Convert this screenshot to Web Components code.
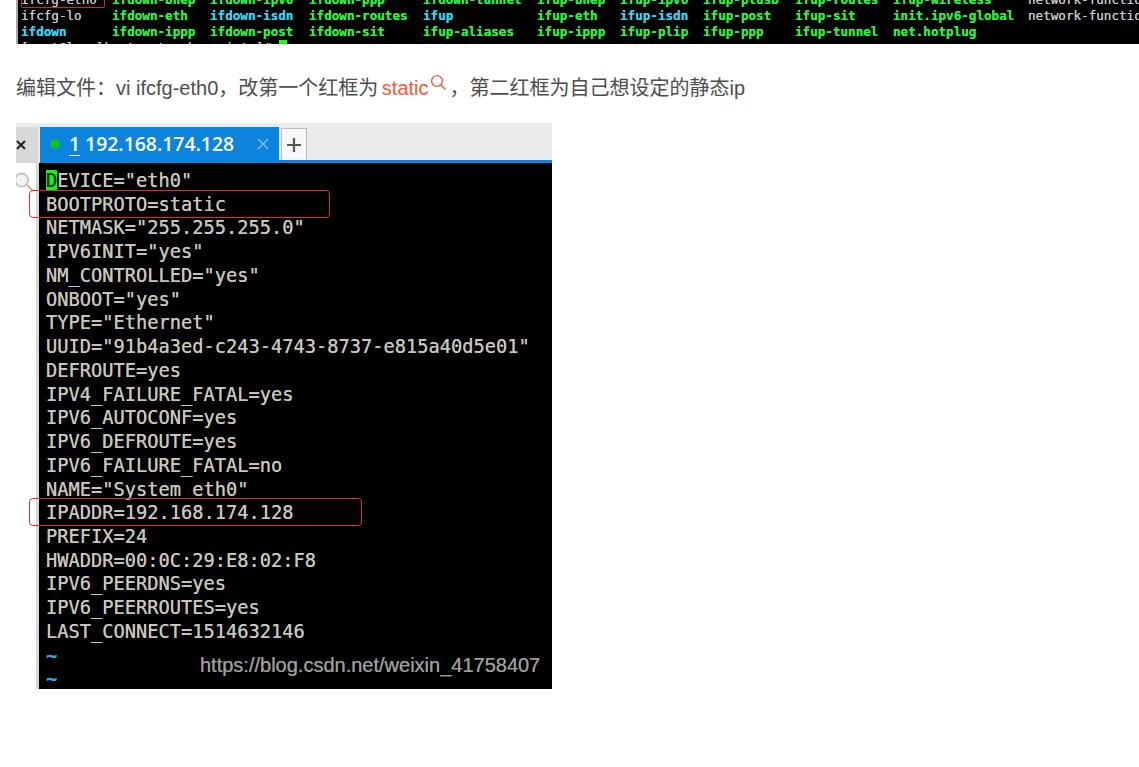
<!DOCTYPE html>
<html lang="zh-CN">
<head>
<meta charset="utf-8">
<title>ifcfg-eth0</title>
<style>
  html, body { margin: 0; padding: 0; background: #fff; }
  body { height: 767px; overflow: hidden; font-family: "Liberation Sans", "Noto Sans CJK SC", sans-serif; }
  main { display: block; padding-left: 16px; }
</style>
</head>
<body>
<main>
  <ls-strip></ls-strip>
  <article-para>编辑文件：vi ifcfg-eth0，改第一个红框为 <search-link>static</search-link>，第二红框为自己想设定的静态ip</article-para>
  <xshell-shot>
    <term-line>DEVICE="eth0"</term-line>
    <term-line>BOOTPROTO=static</term-line>
    <term-line>NETMASK="255.255.255.0"</term-line>
    <term-line>IPV6INIT="yes"</term-line>
    <term-line>NM_CONTROLLED="yes"</term-line>
    <term-line>ONBOOT="yes"</term-line>
    <term-line>TYPE="Ethernet"</term-line>
    <term-line>UUID="91b4a3ed-c243-4743-8737-e815a40d5e01"</term-line>
    <term-line>DEFROUTE=yes</term-line>
    <term-line>IPV4_FAILURE_FATAL=yes</term-line>
    <term-line>IPV6_AUTOCONF=yes</term-line>
    <term-line>IPV6_DEFROUTE=yes</term-line>
    <term-line>IPV6_FAILURE_FATAL=no</term-line>
    <term-line>NAME="System eth0"</term-line>
    <term-line>IPADDR=192.168.174.128</term-line>
    <term-line>PREFIX=24</term-line>
    <term-line>HWADDR=00:0C:29:E8:02:F8</term-line>
    <term-line>IPV6_PEERDNS=yes</term-line>
    <term-line>IPV6_PEERROUTES=yes</term-line>
    <term-line>LAST_CONNECT=1514632146</term-line>
    <term-line tilde>~</term-line>
    <term-line tilde>~</term-line>
  </xshell-shot>
</main>

<script>
const LISTING = [
  ['ifcfg-eth0:f', 'ifdown-bnep', 'ifdown-ipv6', 'ifdown-ppp', 'ifdown-tunnel', 'ifup-bnep', 'ifup-ipv6', 'ifup-plusb', 'ifup-routes', 'ifup-wireless', 'network-functions:f'],
  ['ifcfg-lo:f', 'ifdown-eth', 'ifdown-isdn:l', 'ifdown-routes', 'ifup:l', 'ifup-eth', 'ifup-isdn:l', 'ifup-post', 'ifup-sit', 'init.ipv6-global', 'network-functions-ipv6:f'],
  ['ifdown:l', 'ifdown-ippp', 'ifdown-post', 'ifdown-sit', 'ifup-aliases', 'ifup-ippp', 'ifup-plip', 'ifup-ppp', 'ifup-tunnel', 'net.hotplug', ''],
];

class LsStrip extends HTMLElement {
  constructor() {
    super();
    const shadow = this.attachShadow({ mode: 'open' });
    const cells = LISTING.flat().map(entry => {
      const [name, kind] = entry.split(':');
      return `<span class="${kind || 'x'}">${name}</span>`;
    }).join('');
    shadow.innerHTML = `
      <style>
        :host { display: block; height: 44px; overflow: hidden; background: #000; border-left: 2px solid #a9a9a9; box-sizing: border-box; position: relative; }
        .inner { margin: -8px 0 0 3px; font: 12.6px/16px "DejaVu Sans Mono", monospace; text-shadow: 0 0 .6px currentColor; }
        .grid { display: grid; grid-template-columns: 91px 98px 99px 114px 114px 83px 83px 92px 98px 135px 200px; grid-auto-rows: 16px; white-space: pre; }
        .x { color: #2bf03c; font-weight: 700; }
        .l { color: #35d4ee; font-weight: 700; }
        .f { color: #c8c8c8; }
        .prompt { color: #c8c8c8; height: 16px; white-space: pre; }
        .cur { display: inline-block; width: 8px; height: 16px; background: #19ff19; vertical-align: top; }
        .box { position: absolute; left: 3px; top: -6px; width: 84px; height: 14px; border: 1px solid #d02a2a; border-radius: 2px; box-sizing: border-box; }
      </style>
      <div class="inner">
        <div class="grid">${cells}</div>
        <div class="prompt">[root@localhost network-scripts]# <span class="cur"></span></div>
      </div>
      <div class="box"></div>`;
  }
}

class ArticlePara extends HTMLElement {
  constructor() {
    super();
    this.attachShadow({ mode: 'open' }).innerHTML = `
      <style>
        :host { display: block; margin: 29px 0 20px; font-size: 20px; line-height: 30px; color: #4d4d4d; white-space: nowrap; }
      </style>
      <slot></slot>`;
  }
}

class SearchLink extends HTMLElement {
  constructor() {
    super();
    this.attachShadow({ mode: 'open' }).innerHTML = `
      <style>
        :host { display: inline; color: #fc5531; margin-left: -2px; }
        svg { width: 18px; height: 18px; vertical-align: 3px; margin-right: 3px; }
      </style>
      <slot></slot><svg viewBox="0 0 18 18" fill="none" stroke="#fc5531" stroke-width="1.4" stroke-linecap="round"><circle cx="8" cy="7" r="5.4"/><path d="M12 11l4 4"/></svg>`;
  }
}

class TermLine extends HTMLElement {
  constructor() {
    super();
    // no whitespace around the slot: white-space: pre would render it
    this.attachShadow({ mode: 'open' }).innerHTML = `<style>
        :host { display: block; height: 23.74px; white-space: pre; }
        :host([tilde]) { color: #2aa7e0; font-weight: 700; }
      </style><slot></slot>`;
  }
  connectedCallback() {
    // the vim cursor sits on the very first character of the buffer
    if (this.previousElementSibling === null && !this.dataset.done) {
      this.dataset.done = '1';
      const first = this.textContent[0];
      const rest = this.textContent.slice(1);
      this.textContent = '';
      const cur = document.createElement('span');
      cur.textContent = first;
      cur.style.cssText = 'background:#19ef19;color:#0a3a0a;display:inline-block;height:21px;line-height:21px;vertical-align:top;margin-top:1px';
      this.append(cur, rest);
    }
  }
}

class XshellShot extends HTMLElement {
  constructor() {
    super();
    this.attachShadow({ mode: 'open' }).innerHTML = `
      <style>
        :host { display: block; position: relative; width: 536px; height: 566px; overflow: hidden; background: #fff; }
        .tabs { display: flex; height: 40px; box-sizing: border-box; padding-top: 4px; background: #ebebeb; }
        .side-x { flex: none; width: 22px; display: flex; align-items: center; background: #d8d8d8; }
        .strip { flex: 1; margin-left: 2px; display: flex; box-sizing: border-box; border-bottom: 3px solid #0a84dc; }
        .tab { width: 239px; margin-bottom: -3px; background: #0a84dc; color: #fff; display: flex; align-items: center; font: 600 19.4px "Open Sans", sans-serif; box-sizing: border-box; padding: 0 0 3px 10px; }
        .dot { width: 10px; height: 10px; border-radius: 50%; background: #0fbf24; margin-right: 9px; }
        .num { text-decoration: underline; text-underline-offset: 4px; margin-right: 5px; }
        .close { margin-left: 23px; }
        .plus { margin-left: 2px; margin-top: 1px; width: 26px; box-sizing: border-box; background: #f7f7f7; border: 1.5px solid #bdbdbd; border-bottom: 0; display: flex; align-items: center; justify-content: center; }
        .body { display: flex; height: 526px; }
        .gutter { flex: none; width: 20px; background: #fff; position: relative; }
        .rail { flex: none; width: 3px; background: #d6d6d6; }
        .term { flex: 1; min-width: 0; background: #000; color: #c9c6bd; padding: 6px 0 0 7px; font: 18.7px/23.74px "DejaVu Sans Mono", monospace; text-shadow: 0 0 .6px currentColor; }
        .mark { position: absolute; left: 184px; top: 529px; font: 20px/26px "Liberation Sans", sans-serif; color: #9c9c9c; white-space: nowrap; text-shadow: 0 0 .6px currentColor; }
        .red { position: absolute; left: 13px; box-sizing: border-box; height: 28px; border: 1.5px solid #d8322e; border-radius: 4px; }
        .red.a { top: 67px; width: 301px; }
        .red.b { top: 375px; width: 333px; }
      </style>
      <div class="tabs">
        <div class="side-x"><svg width="12" height="12" viewBox="0 0 12 12" stroke="#222" stroke-width="2"><path d="M1 2l8 8M9 2l-8 8"/></svg></div>
        <div class="strip">
          <div class="tab">
            <span class="dot"></span><span class="num">1</span><span>192.168.174.128</span>
            <svg class="close" width="12" height="12" viewBox="0 0 12 12" stroke="#8fc4ea" stroke-width="1.2"><path d="M1 1l10 10M11 1L1 11"/></svg>
          </div>
          <div class="plus"><svg width="14" height="14" viewBox="0 0 14 14" stroke="#555" stroke-width="2.2"><path d="M7 0v14M0 7h14"/></svg></div>
        </div>
      </div>
      <div class="body">
        <div class="gutter">
          <svg width="20" height="32" viewBox="0 0 20 32" fill="none" style="position:absolute;left:0;top:4px">
            <circle cx="5.7" cy="13" r="6.5" fill="#f2f2f2" stroke="#c4c4c4" stroke-width="1.8"/>
            <path d="M11 18l6 6" stroke="#d9b48a" stroke-width="2.2"/>
          </svg>
        </div>
        <div class="rail"></div>
        <div class="term"><slot></slot></div>
      </div>
      <div class="red a"></div>
      <div class="red b"></div>
      <div class="mark">https://blog.csdn.net/weixin_41758407</div>`;
  }
}

customElements.define('ls-strip', LsStrip);
customElements.define('article-para', ArticlePara);
customElements.define('search-link', SearchLink);
customElements.define('term-line', TermLine);
customElements.define('xshell-shot', XshellShot);
</script>
</body>
</html>
